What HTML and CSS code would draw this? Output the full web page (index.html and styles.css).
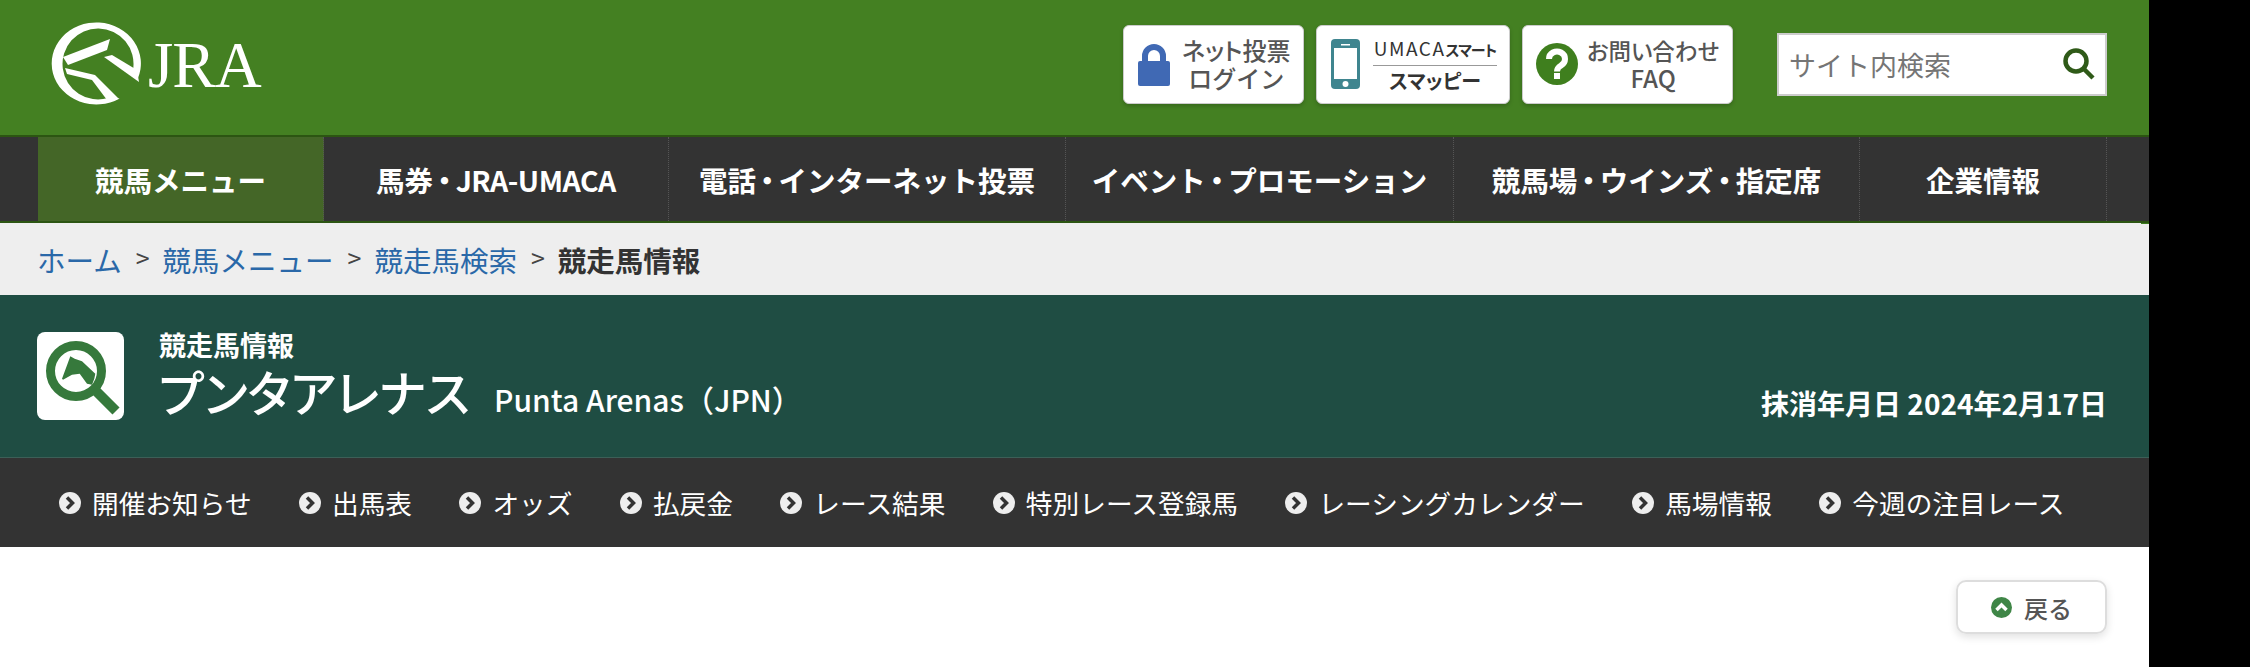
FILE: index.html
```html
<!DOCTYPE html>
<html lang="ja">
<head>
    <meta charset="UTF-8">
    <title>競走馬情報 プンタアレナス</title>
    <link rel="stylesheet" href="styles.css">
</head>
<body>

<svg class="defs" width="0" height="0">
    <symbol id="bullet" viewBox="0 0 22 22">
        <circle cx="11" cy="11" r="11" fill="#eee"/>
        <path fill="none" stroke="#333" stroke-width="3.500" d="M8 5.500L13.500 11L8 16.500"/>
    </symbol>
</svg>

<div class="page">
    <!-- Header -->
    <div class="header">
        <a class="logo">
            <svg class="logo-mark" viewBox="50 18 92 90" width="92" height="90">
                <path fill="#fff" d="M119.700 98.400A44.600 41 0 1 1 137.800 78.500L133 70A35.500 35.500 0 1 0 108 98Z"/>
                <path fill="#fff" d="M63 57L110 39L107 50L68 65Z"/>
                <path fill="#fff" d="M65 68L95 75L119 99L107 100L92 80L67 74Z"/>
                <path fill="#fff" d="M104 57L112 55L137 70L139 82Z"/>
            </svg>
            <span class="logo-text">JRA</span>
        </a>
        <div class="header-right">
            <a class="head-btn btn-login">
                <svg viewBox="0 0 32 44" width="32" height="44">
                    <path fill="none" stroke="#4069b4" stroke-width="6" d="M7 20V14a9 9 0 0 1 18 0V20"/>
                    <rect x="0" y="19" width="32" height="25" rx="2" fill="#4069b4"/>
                </svg>
                <span class="head-text">ネット投票<span class="line2">ログイン</span></span>
            </a>
            <a class="head-btn btn-umaca">
                <svg viewBox="0 0 29 50" width="29" height="50">
                    <rect width="29" height="50" rx="4" fill="#3f858f"/>
                    <rect x="3" y="9" width="23" height="31" fill="#fff"/>
                    <rect x="10" y="5" width="9" height="1.500" fill="#fff"/>
                    <circle cx="14.500" cy="45" r="3" fill="#fff"/>
                </svg>
                <span class="umaca">
                    <span class="umaca-top">UMACA<span class="umaca-kana">スマート</span></span>
                    <span class="umaca-bottom">スマッピー</span>
                </span>
            </a>
            <a class="head-btn btn-faq">
                <svg viewBox="0 0 42 42" width="42" height="42">
                    <circle cx="21" cy="21" r="21" fill="#3f7f1e"/>
                    <path fill="none" stroke="#fff" stroke-width="6" d="M13 16a8 7.500 0 1 1 12 6.500c-3 1.800-4 3-4 6"/>
                    <rect x="18" y="30" width="6" height="6" fill="#fff"/>
                </svg>
                <span class="head-text">お問い合わせ<span class="line2">FAQ</span></span>
            </a>
            <div class="search">
                <span class="search-text">サイト内検索</span>
                <svg viewBox="0 0 32 32" width="32" height="32">
                    <circle cx="13" cy="13" r="10.500" fill="none" stroke="#2f5a18" stroke-width="4.500"/>
                    <path stroke="#2f5a18" stroke-width="4.500" d="M20 20L30 30"/>
                </svg>
            </div>
        </div>
    </div>

    <!-- Global nav -->
    <div class="gnav">
        <a class="gnav-item active">競馬メニュー</a>
        <a class="gnav-item">馬券<span class="dot">・</span><span class="latin">JRA-UMACA</span></a>
        <a class="gnav-item">電話<span class="dot">・</span>インターネット投票</a>
        <a class="gnav-item">イベント<span class="dot">・</span>プロモーション</a>
        <a class="gnav-item">競馬場<span class="dot">・</span>ウインズ<span class="dot">・</span>指定席</a>
        <a class="gnav-item">企業情報</a>
    </div>

    <!-- Breadcrumb -->
    <div class="crumb">
        <a>ホーム</a><span class="sep">&gt;</span>
        <a>競馬メニュー</a><span class="sep">&gt;</span>
        <a>競走馬検索</a><span class="sep">&gt;</span>
        <strong>競走馬情報</strong>
    </div>

    <!-- Title -->
    <div class="title-bar">
        <div class="title-icon">
            <svg viewBox="37 332 87 88" width="87" height="88">
                <circle cx="76" cy="371" r="25.500" fill="none" stroke="#36793c" stroke-width="9"/>
                <path stroke="#36793c" stroke-width="10" d="M95 390L116 411"/>
                <path fill="#36793c" d="M62 378.700L67 365.300L70.300 356.300L74.700 358.700L82 361.300L95.300 373.700L94.300 378.700L92 384.700L87 383.700L79.700 373.700L72 374.700L63 379.700Z"/>
            </svg>
        </div>
        <div class="title-main">
            <div class="title-sub">競走馬情報</div>
            <div class="title-name">
                <span class="name-ja">プンタアレナス</span>
                <span class="name-en">Punta Arenas（JPN）</span>
            </div>
        </div>
        <div class="title-date">抹消年月日 2024年2月17日</div>
    </div>

    <!-- Sub nav -->
    <div class="subnav">
        <a class="sub-item"><svg class="bullet"><use href="#bullet"/></svg>開催お知らせ</a>
        <a class="sub-item"><svg class="bullet"><use href="#bullet"/></svg>出馬表</a>
        <a class="sub-item"><svg class="bullet"><use href="#bullet"/></svg>オッズ</a>
        <a class="sub-item"><svg class="bullet"><use href="#bullet"/></svg>払戻金</a>
        <a class="sub-item"><svg class="bullet"><use href="#bullet"/></svg>レース結果</a>
        <a class="sub-item"><svg class="bullet"><use href="#bullet"/></svg>特別レース登録馬</a>
        <a class="sub-item"><svg class="bullet"><use href="#bullet"/></svg>レーシングカレンダー</a>
        <a class="sub-item"><svg class="bullet"><use href="#bullet"/></svg>馬場情報</a>
        <a class="sub-item"><svg class="bullet"><use href="#bullet"/></svg>今週の注目レース</a>
    </div>

    <div class="back-row">
        <a class="back-btn">
            <svg viewBox="0 0 21 21" width="21" height="21">
                <circle cx="10.500" cy="10.500" r="10.500" fill="#3f8647"/>
                <path fill="none" stroke="#fff" stroke-width="3.500" d="M5.500 13L10.500 8L15.500 13"/>
            </svg>
            戻る
        </a>
    </div>
</div>

</body>
</html>
```

FILE: styles.css
```css
html, body {
    margin: 0;
    padding: 0;
    background-color: #000;
}
body {
    font-family: "Noto Sans CJK JP", "Noto Sans", sans-serif;
    color: #333;
    overflow: hidden;
}
.defs {
    display: block;
    height: 0;
}
.page {
    width: 2149px;
    height: 667px;
    background-color: #fff;
    overflow: hidden;
}

/* header */
.header {
    height: 135px;
    background-color: #448022;
    display: flex;
    justify-content: space-between;
    align-items: center;
    padding: 0 42px 0 50px;
}
.logo {
    display: flex;
    align-items: flex-start;
    height: 90px;
    margin-bottom: 9px;
}
.logo-text {
    font-family: "Liberation Serif", serif;
    font-size: 65px;
    line-height: 65px;
    color: #fff;
    margin: 15px 0 0 6px;
    letter-spacing: -1px;
}
.header-right {
    display: flex;
    align-items: center;
    margin-bottom: 7px;
}
.head-btn {
    height: 79px;
    background-color: #fff;
    border: 1px solid #ccc;
    border-radius: 6px;
    box-shadow: 0 2px 4px rgba(0, 0, 0, 0.2);
    display: flex;
    align-items: center;
    margin-right: 12px;
    box-sizing: border-box;
}
.head-btn svg {
    flex-shrink: 0;
}
.btn-login {
    width: 181px;
    padding-left: 14px;
    gap: 12px;
}
.btn-umaca {
    width: 194px;
    padding-left: 14px;
    gap: 13px;
}
.btn-faq {
    width: 211px;
    padding-left: 13px;
    gap: 9px;
    margin-right: 44px;
}
.btn-faq .head-text {
    font-size: 22.500px;
    padding-right: 20px;
}
.head-text {
    font-size: 24px;
    line-height: 28px;
    font-weight: 500;
    color: #555;
    text-align: center;
    font-feature-settings: "palt";
    flex: 1;
    padding-right: 15px;
    white-space: nowrap;
}
.line2 {
    display: block;
    font-size: 24px;
    font-feature-settings: normal;
}
.umaca {
    display: flex;
    flex-direction: column;
    width: 124px;
    text-align: center;
}
.umaca-top {
    font-size: 19px;
    line-height: 30px;
    letter-spacing: 1.500px;
    color: #333;
    border-bottom: 1px solid #999;
    white-space: nowrap;
}
.umaca-kana {
    font-size: 15px;
    font-weight: 700;
    letter-spacing: -1px;
    font-feature-settings: "palt";
}
.umaca-bottom {
    font-size: 20px;
    line-height: 30px;
    font-weight: 700;
    color: #333;
    font-feature-settings: "palt";
}
.search {
    width: 330px;
    height: 63px;
    background-color: #fff;
    border: 2px solid #ccc;
    box-sizing: border-box;
    display: flex;
    justify-content: space-between;
    align-items: center;
    padding: 0 10px;
}
.search-text {
    font-size: 27px;
    color: #757575;
}

/* global nav */
.gnav {
    height: 88px;
    background-color: #333;
    border-top: 2px solid #2c5512;
    border-bottom: 2px solid #2c5512;
    box-sizing: border-box;
    padding-left: 38px;
    display: grid;
    grid-template-columns: 286px 345px 397px 388px 406px 247px;
}
.gnav-item {
    display: flex;
    align-items: center;
    justify-content: center;
    color: #fff;
    font-size: 28.500px;
    font-weight: 700;
    border-right: 1px dotted #555;
    white-space: nowrap;
}
.gnav-item.active {
    background-color: #446627;
}
.dot {
    margin: 0 -3px;
}
.latin {
    letter-spacing: -0.500px;
}

/* breadcrumb */
.crumb {
    height: 72px;
    background: linear-gradient(#3c7a1e, #3c7a1e) no-repeat right top / 8px 1px, #eee;
    box-sizing: border-box;
    padding-left: 37px;
    display: flex;
    align-items: center;
    font-size: 28.500px;
}
.crumb a {
    color: #2a68a8;
}
.crumb strong {
    color: #333;
}
.sep {
    font-size: 25px;
    color: #444;
    margin: 0 13px 4px 14px;
}

/* title */
.title-bar {
    height: 163px;
    background-color: #1f4d43;
    box-sizing: border-box;
    border-bottom: 1px solid #3c5f57;
    padding: 37px 42px 0 37px;
    display: flex;
    align-items: flex-start;
    color: #fff;
}
.title-icon {
    width: 87px;
    height: 88px;
    background-color: #fff;
    border-radius: 8px;
    overflow: hidden;
    flex-shrink: 0;
}
.title-main {
    margin-left: 35px;
    flex: 1;
}
.title-sub {
    font-size: 27px;
    line-height: 32px;
    font-weight: 700;
    margin-top: -3px;
}
.title-name {
    display: flex;
    align-items: baseline;
}
.name-ja {
    font-size: 49px;
    line-height: 60px;
    font-weight: 500;
    font-feature-settings: "palt";
}
.name-en {
    font-size: 30px;
    font-weight: 500;
    margin-left: 24px;
}
.title-date {
    font-size: 28px;
    font-weight: 700;
    line-height: 40px;
    margin-top: 51px;
    font-feature-settings: "palt";
}

/* sub nav */
.subnav {
    height: 89px;
    background-color: #333;
    display: flex;
    align-items: center;
    gap: 47.400px;
    padding-left: 59px;
}
.sub-item {
    color: #fff;
    font-size: 26.700px;
    display: flex;
    align-items: center;
    white-space: nowrap;
}
.bullet {
    width: 22px;
    height: 22px;
    margin-right: 11px;
}

/* back button */
.back-row {
    display: flex;
    justify-content: flex-end;
    padding: 33px 42px 0 0;
}
.back-btn {
    width: 151px;
    height: 54px;
    box-sizing: border-box;
    border: 2px solid #ddd;
    border-radius: 10px;
    box-shadow: 0 3px 8px rgba(0, 0, 0, 0.12);
    display: flex;
    align-items: center;
    justify-content: center;
    gap: 12px;
    font-size: 24px;
    font-weight: 500;
    color: #555;
}
```
